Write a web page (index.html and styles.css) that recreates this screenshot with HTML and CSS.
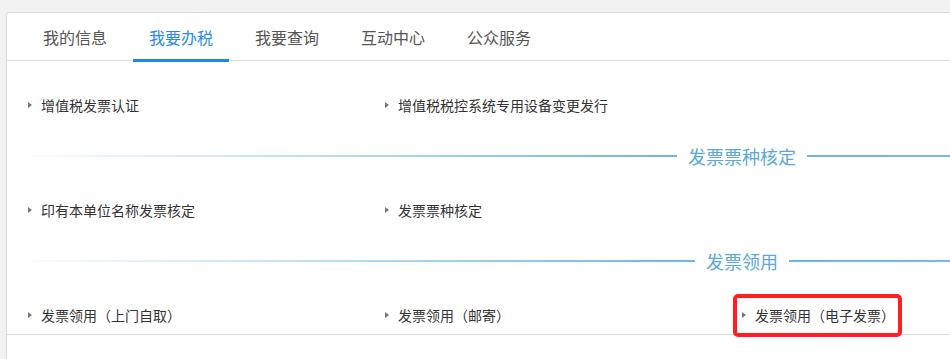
FILE: index.html
```html
<!DOCTYPE html>
<html lang="zh-CN">
<head>
<meta charset="utf-8">
<title>我要办税</title>
<link rel="stylesheet" href="styles.css">
</head>
<body>
<div class="card">
  <div class="tabs">
    <div class="tab">我的信息</div>
    <div class="tab active">我要办税</div>
    <div class="tab">我要查询</div>
    <div class="tab">互动中心</div>
    <div class="tab">公众服务</div>
  </div>
  <div class="content">
    <div class="row">
      <div class="item"><span class="tri"></span>增值税发票认证</div>
      <div class="item"><span class="tri"></span>增值税税控系统专用设备变更发行</div>
    </div>
    <div class="divider">
      <span class="line left"></span>
      <span class="title">发票票种核定</span>
      <span class="line right"></span>
    </div>
    <div class="row">
      <div class="item"><span class="tri"></span>印有本单位名称发票核定</div>
      <div class="item"><span class="tri"></span>发票票种核定</div>
    </div>
    <div class="divider">
      <span class="line left"></span>
      <span class="title">发票领用</span>
      <span class="line right"></span>
    </div>
    <div class="row last">
      <div class="item"><span class="tri"></span>发票领用（上门自取）</div>
      <div class="item"><span class="tri"></span>发票领用（邮寄）</div>
      <div class="item marked"><span class="tri"></span>发票领用（电子发票）<span class="mark"></span></div>
    </div>
  </div>
  <div class="below"></div>
</div>
</body>
</html>
```

FILE: styles.css
```css
html, body {
  margin: 0;
  padding: 0;
  overflow: hidden;
  background: #f2f2f2;
}
body {
  font-family: "Microsoft YaHei", "Noto Sans CJK SC", "Noto Sans", sans-serif;
  width: 950px;
  height: 359px;
}
.card {
  margin: 12px 0 0 6px;
  width: 1470px;
  background: #fff;
  border: 1px solid #dcdcdc;
  border-radius: 3px;
}
.tabs {
  display: flex;
  gap: 10px;
  padding-left: 20px;
  height: 47px;
  border-bottom: 1px solid #dcdcdc;
}
.tab {
  position: relative;
  padding: 0 16px;
  font-size: 16px;
  line-height: 48px;
  color: #555;
}
.tab.active {
  color: #2a8ae4;
}
.tab.active::after {
  content: "";
  position: absolute;
  left: 0;
  right: 0;
  bottom: -2px;
  height: 3px;
  background: #1f88e3;
}
.content {
  padding-top: 24px;
  border-bottom: 1px solid #dcdcdc;
}
.row {
  display: grid;
  grid-template-columns: repeat(4, 357px);
  padding-left: 21px;
  height: 40px;
}
.row.last {
  height: 39px;
}
.item {
  position: relative;
  display: flex;
  align-items: center;
  font-size: 14px;
  color: #333;
  height: 40px;
}
.tri {
  width: 0;
  height: 0;
  border-left: 4px solid #777;
  border-top: 3px solid transparent;
  border-bottom: 3px solid transparent;
  margin-right: 9px;
}
.divider {
  display: flex;
  align-items: center;
  margin: 21px 6px 24px;
  height: 20px;
}
.line {
  flex: 1;
  height: 2px;
}
.line.left {
  background: linear-gradient(to right, rgba(108, 182, 223, 0), #6cb6df);
}
.line.right {
  background: linear-gradient(to right, #6cb6df, #7cc0e3 40%, rgba(124, 192, 227, 0.2));
}
.title {
  padding: 0 11px;
  font-size: 18px;
  line-height: 20px;
  color: #5ca8d8;
}
.mark {
  position: absolute;
  left: -9px;
  top: -1px;
  width: 169px;
  height: 43px;
  box-sizing: border-box;
  border: 4px solid #ff1f1f;
  border-radius: 5px;
}
.below {
  height: 40px;
}
```
